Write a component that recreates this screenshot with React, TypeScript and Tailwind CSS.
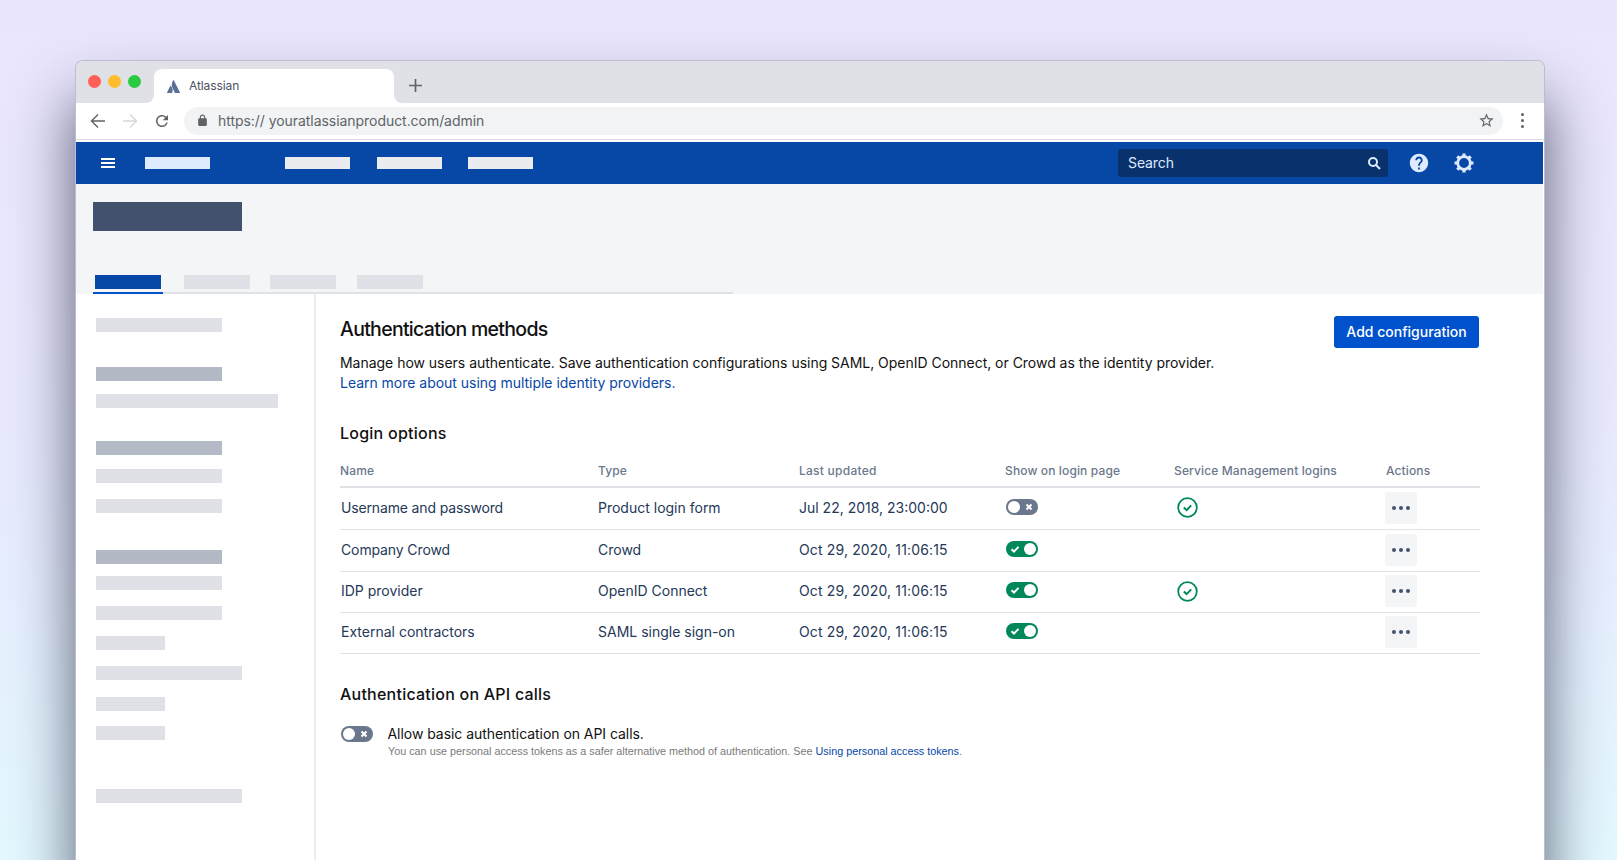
const sans = "font-[Inter,sans-serif]";

function Toggle({ on }: { on: boolean }) {
  return (
    <div className={`flex h-[16px] w-[32px] items-center justify-between rounded-full px-[2px] ${on ? "bg-[#00875A]" : "bg-[#6B778C]"}`}>
      {on ? (
        <>
          <svg width="12" height="12" viewBox="0 0 12 12" className="ml-[1px]"><path d="M2.5 6.2 5 8.5l4.5-4.6" fill="none" stroke="#fff" strokeWidth="2" /></svg>
          <span className="h-[12px] w-[12px] rounded-full bg-white" />
        </>
      ) : (
        <>
          <span className="h-[12px] w-[12px] rounded-full bg-white" />
          <svg width="12" height="12" viewBox="0 0 12 12" className="mr-[1px]"><path d="M3.5 3.5l5 5m0-5l-5 5" fill="none" stroke="#fff" strokeWidth="2" /></svg>
        </>
      )}
    </div>
  );
}

function CheckCircle() {
  return (
    <svg width="21" height="21" viewBox="0 0 21 21">
      <circle cx="10.5" cy="10.5" r="9.3" fill="none" stroke="#00875A" strokeWidth="1.8" />
      <path d="M6.8 10.6l2.8 2.5 4.6-4.7" fill="none" stroke="#00875A" strokeWidth="2" />
    </svg>
  );
}

function More() {
  return (
    <div className="-ml-[1px] flex h-[32px] w-[32px] items-center justify-center gap-[3px] rounded-[3px] bg-[#F4F5F7]">
      <span className="h-[4px] w-[4px] rounded-full bg-[#42526E]" />
      <span className="h-[4px] w-[4px] rounded-full bg-[#42526E]" />
      <span className="h-[4px] w-[4px] rounded-full bg-[#42526E]" />
    </div>
  );
}

const grid = "grid grid-cols-[258px_201px_206px_169px_212px_1fr] items-center";

const rows = [
  { name: "Username and password", track: "tracking-[-0.15px]", type: "Product login form", date: "Jul 22, 2018, 23:00:00", dt: "", on: false, sm: true, h: "h-[42px]", tx: "" },
  { name: "Company Crowd", track: "tracking-[-0.12px]", type: "Crowd", date: "Oct 29, 2020, 11:06:15", dt: "tracking-[0.14px]", on: true, sm: false, h: "h-[42px]", tx: "" },
  { name: "IDP provider", track: "", type: "OpenID Connect", date: "Oct 29, 2020, 11:06:15", dt: "tracking-[0.14px]", on: true, sm: true, h: "h-[41px]", tx: "-mt-[2px]" },
  { name: "External contractors", track: "", type: "SAML single sign-on", date: "Oct 29, 2020, 11:06:15", dt: "tracking-[0.14px]", on: true, sm: false, h: "h-[41px]", tx: "-mt-[2px]" },
];

const sideBars = [
  "mt-[24px] w-[126px] bg-[#DFE1E6]",
  "mt-[35px] w-[126px] bg-[#B3BAC5]",
  "mt-[13px] w-[182px] bg-[#DFE1E6]",
  "mt-[33px] w-[126px] bg-[#B3BAC5]",
  "mt-[14px] w-[126px] bg-[#DFE1E6]",
  "mt-[16px] w-[126px] bg-[#DFE1E6]",
  "mt-[37px] w-[126px] bg-[#B3BAC5]",
  "mt-[12px] w-[126px] bg-[#DFE1E6]",
  "mt-[16px] w-[126px] bg-[#DFE1E6]",
  "mt-[16px] w-[69px] bg-[#DFE1E6]",
  "mt-[16px] w-[146px] bg-[#DFE1E6]",
  "mt-[17px] w-[69px] bg-[#DFE1E6]",
  "mt-[15px] w-[69px] bg-[#DFE1E6]",
  "mt-[49px] w-[146px] bg-[#DFE1E6]",
];

export default function App() {
  return (
    <div className={`h-[860px] w-full overflow-hidden bg-gradient-to-b from-[#E9E5FD] via-[#E8E9FD] to-[#E3F8FF] pl-[75px] pt-[60px] ${sans}`}>
      <div className="flex h-[900px] w-[1470px] flex-col rounded-t-[8px] border border-b-0 border-[#BDBDCF] bg-white shadow-[0_40px_60px_rgba(30,35,60,0.72)]">
        {/* tab strip */}
        <div className="flex h-[42px] items-end rounded-t-[7px] bg-[#DFE1E6] pl-[12px]">
          <div className="mb-[15px] flex gap-[7px]">
            <span className="h-[13px] w-[13px] rounded-full bg-[#FF5F57]" />
            <span className="h-[13px] w-[13px] rounded-full bg-[#FFBD2E]" />
            <span className="h-[13px] w-[13px] rounded-full bg-[#28CA41]" />
          </div>
          <div className="relative ml-[13px] flex h-[34px] w-[240px] items-center rounded-t-[8px] bg-white pl-[13px]">
            <div className="absolute -left-[8px] bottom-0 h-[8px] w-[8px] bg-white">
              <div className="h-full w-full rounded-br-[8px] bg-[#DFE1E6]" />
            </div>
            <div className="absolute -right-[8px] bottom-0 h-[8px] w-[8px] bg-white">
              <div className="h-full w-full rounded-bl-[8px] bg-[#DFE1E6]" />
            </div>
            <svg width="13" height="13" viewBox="0 0 24 24" fill="#5B7095">
              <path d="M7.12 11.084a.683.683 0 0 0-1.16.126L.075 22.974a.703.703 0 0 0 .63 1.018h8.19a.678.678 0 0 0 .63-.39c1.767-3.65.696-9.203-2.406-12.52z" />
              <path d="M11.434.386a15.515 15.515 0 0 0-.906 15.317l3.95 7.9a.703.703 0 0 0 .628.388h8.19a.703.703 0 0 0 .63-1.017L12.63.38a.664.664 0 0 0-1.196.006z" />
            </svg>
            <span className="ml-[9px] text-[12px] tracking-[-0.1px] text-[#4A5160]">Atlassian</span>
          </div>
          <svg width="13" height="13" viewBox="0 0 13 13" className="mb-[11px] ml-[15px]"><path d="M6.5 0v13M0 6.5h13" stroke="#5F6368" strokeWidth="1.7" /></svg>
        </div>
        {/* toolbar */}
        <div className="flex h-[37px] items-center border-b border-[#DADCE0] pb-[1px] pl-[13px]">
          <svg width="18" height="18" viewBox="0 0 18 18" fill="none" stroke="#5F6368" strokeWidth="1.4"><path d="M16 9H2.5M9 2.5 2.5 9 9 15.5" /></svg>
          <svg width="18" height="18" viewBox="0 0 18 18" fill="none" stroke="#D5D7DA" strokeWidth="1.4" className="ml-[14px]"><path d="M2 9h13.5M9 2.5 15.5 9 9 15.5" /></svg>
          <svg width="18" height="18" viewBox="0 0 24 24" fill="#5F6368" className="ml-[14px]"><path d="M17.65 6.35A7.958 7.958 0 0 0 12 4c-4.42 0-7.99 3.58-7.99 8s3.57 8 7.99 8c3.73 0 6.84-2.55 7.73-6h-2.08A5.99 5.99 0 0 1 12 18c-3.31 0-6-2.69-6-6s2.69-6 6-6c1.66 0 3.14.69 4.22 1.78L13 11h7V4l-2.35 2.35z" /></svg>
          <div className="ml-[13px] flex h-[28px] w-[1319px] items-center rounded-full bg-[#F1F3F4] pl-[12px] pr-[8px]">
            <svg width="13" height="13" viewBox="0 0 24 24" fill="#5F6368"><path d="M18 8h-1V6c0-2.76-2.24-5-5-5S7 3.24 7 6v2H6c-1.1 0-2 .9-2 2v10c0 1.1.9 2 2 2h12c1.1 0 2-.9 2-2V10c0-1.1-.9-2-2-2zM9 6c0-1.66 1.34-3 3-3s3 1.34 3 3v2H9V6z" /></svg>
            <span className="ml-[9px] text-[14px] tracking-[-0.05px] text-[#5F6368]">https:// youratlassianproduct.com/admin</span>
            <svg width="17" height="17" viewBox="0 0 24 24" fill="#5F6368" className="ml-auto"><path d="M22 9.24l-7.19-.62L12 2 9.19 8.63 2 9.24l5.46 4.73L5.82 21 12 17.27 18.18 21l-1.63-7.03L22 9.24zM12 15.4l-3.76 2.27 1-4.28-3.32-2.88 4.38-.38L12 6.1l1.71 4.04 4.38.38-3.32 2.88 1 4.28L12 15.4z" /></svg>
          </div>
          <div className="ml-[18px] flex flex-col gap-[3px]">
            <span className="h-[3px] w-[3px] rounded-full bg-[#5F6368]" />
            <span className="h-[3px] w-[3px] rounded-full bg-[#5F6368]" />
            <span className="h-[3px] w-[3px] rounded-full bg-[#5F6368]" />
          </div>
        </div>
        <div className="h-[2px]" />
        {/* nav */}
        <div className="mr-[1px] flex h-[42px] items-center bg-[#0747A6] pl-[25px]">
          <div className="flex flex-col gap-[2px]">
            <span className="h-[2px] w-[14px] bg-white" />
            <span className="h-[2px] w-[14px] bg-white" />
            <span className="h-[2px] w-[14px] bg-white" />
          </div>
          <span className="ml-[30px] h-[12px] w-[65px] bg-[#DEEBFF]" />
          <span className="ml-[75px] h-[12px] w-[65px] bg-[#EBECF0]" />
          <span className="ml-[27px] h-[12px] w-[65px] bg-[#EBECF0]" />
          <span className="ml-[26px] h-[12px] w-[65px] bg-[#EBECF0]" />
          <div className="ml-[585px] flex h-[28px] w-[270px] items-center rounded-[3px] bg-[#09326C] pl-[10px] pr-[7px]">
            <span className="-mt-[2px] text-[14px] tracking-[-0.1px] text-[#DEEBFF]">Search</span>
            <svg width="14" height="14" viewBox="0 0 14 14" fill="none" stroke="#DEEBFF" strokeWidth="2" className="ml-auto"><circle cx="6" cy="6" r="4" /><path d="M9 9l4 4" /></svg>
          </div>
          <svg width="22" height="22" viewBox="0 0 24 24" fill="#DEEBFF" className="ml-[20px]"><path d="M12 2C6.48 2 2 6.48 2 12s4.48 10 10 10 10-4.48 10-10S17.52 2 12 2zm1 17h-2v-2h2v2zm2.07-7.75l-.9.92C13.45 12.9 13 13.5 13 15h-2v-.5c0-1.1.45-2.1 1.17-2.83l1.24-1.26c.37-.36.59-.86.59-1.41 0-1.1-.9-2-2-2s-2 .9-2 2H8c0-2.21 1.79-4 4-4s4 1.79 4 4c0 .88-.36 1.68-.93 2.25z" /></svg>
          <svg width="20" height="20" viewBox="0 0 20 20" className="ml-[24px]">
            <circle cx="10" cy="10" r="6.3" fill="none" stroke="#DEEBFF" strokeWidth="2.8" />
            <g stroke="#DEEBFF" strokeWidth="3.2">
              <path d="M10 0.5v3M10 16.5v3M0.5 10h3M16.5 10h3" />
              <path d="M3.3 3.3l2.1 2.1M14.6 14.6l2.1 2.1M3.3 16.7l2.1-2.1M14.6 5.4l2.1-2.1" />
            </g>
          </svg>
        </div>
        {/* page header */}
        <div className="mr-[1px] h-[110px] bg-[#F4F5F7] pl-[17px] pt-[18px]">
          <div className="h-[29px] w-[149px] bg-[#42526E]" />
          <div className="ml-[2px] mt-[44px] flex h-[14px]">
            <span className="w-[66px] bg-[#0747A6]" />
            <span className="ml-[23px] w-[66px] bg-[#DFE1E6]" />
            <span className="ml-[20px] w-[66px] bg-[#DFE1E6]" />
            <span className="ml-[21px] w-[66px] bg-[#DFE1E6]" />
          </div>
          <div className="mt-[3px] h-[2px] w-[640px] bg-[#DFE1E6]">
            <div className="h-[2px] w-[70px] bg-[#0052CC]" />
          </div>
        </div>
        {/* body */}
        <div className="flex flex-1">
          <aside className="flex w-[240px] flex-col border-r-2 border-[#EBECF0] pl-[20px]">
            {sideBars.map((c, i) => (
              <div key={i} className={`h-[14px] shrink-0 ${c}`} />
            ))}
          </aside>
          <main className="w-[1164px] pl-[24px]">
            <div className="flex justify-between pt-[22px]">
              <h1 className="pt-[1px] text-[19.5px] font-medium leading-[24px] tracking-[-0.7px] text-[#111]">Authentication methods</h1>
              <button className="mr-[1px] h-[32px] w-[145px] rounded-[3px] bg-[#0052CC] pb-[1px] text-[14px] font-medium text-white">Add configuration</button>
            </div>
            <p className="mt-[5px] text-[14px] leading-[20px] tracking-[-0.025px] text-[#111]">
              Manage how users authenticate. Save authentication configurations using SAML, OpenID Connect, or Crowd as the identity provider.
              <br />
              <a className="text-[#0747A6]">Learn more about using multiple identity providers.</a>
            </p>
            <h2 className="mt-[28px] text-[16px] font-medium leading-[24px] tracking-[0.24px] text-[#111]">Login options</h2>
            <div className={`${grid} mt-[16px] h-[27px] border-b-2 border-[#DFE1E6] pb-[6px] text-[12px] font-medium tracking-[0.13px] text-[#6B778C]`}>
              <span>Name</span>
              <span>Type</span>
              <span className="tracking-[0.25px]">Last updated</span>
              <span>Show on login page</span>
              <span>Service Management logins</span>
              <span>Actions</span>
            </div>
            {rows.map((r) => (
              <div key={r.name} className={`${grid} ${r.h} border-b border-[#DFE1E6] pb-[2px] text-[14px] text-[#253858]`}>
                <span className={`pl-[1px] ${r.track} ${r.tx}`}>{r.name}</span>
                <span className={r.tx}>{r.type}</span>
                <span className={`${r.dt} ${r.tx}`}>{r.date}</span>
                <div className="-mt-[2px] pl-[1px]"><Toggle on={r.on} /></div>
                <div className="pl-[3px]">{r.sm && <CheckCircle />}</div>
                <More />
              </div>
            ))}
            <h2 className="mt-[28px] text-[16px] font-medium leading-[24px] tracking-[0.23px] text-[#111]">Authentication on API calls</h2>
            <div className="mt-[19px] flex pl-[1px]">
              <div className="pt-[1px]"><Toggle on={false} /></div>
              <div className="ml-[14px]">
                <div className="ml-[0.5px] text-[14px] leading-[18px] tracking-[-0.05px] text-[#111]">Allow basic authentication on API calls.</div>
                <div className="ml-[1px] mt-[1px] font-[Liberation_Sans,Arial,sans-serif] text-[10.8px] leading-[15px] text-[#7A7A7A]">
                  You can use personal access tokens as a safer alternative method of authentication. See{" "}
                  <a className="text-[#0747A6]">Using personal access tokens</a>.
                </div>
              </div>
            </div>
          </main>
        </div>
      </div>
    </div>
  );
}
